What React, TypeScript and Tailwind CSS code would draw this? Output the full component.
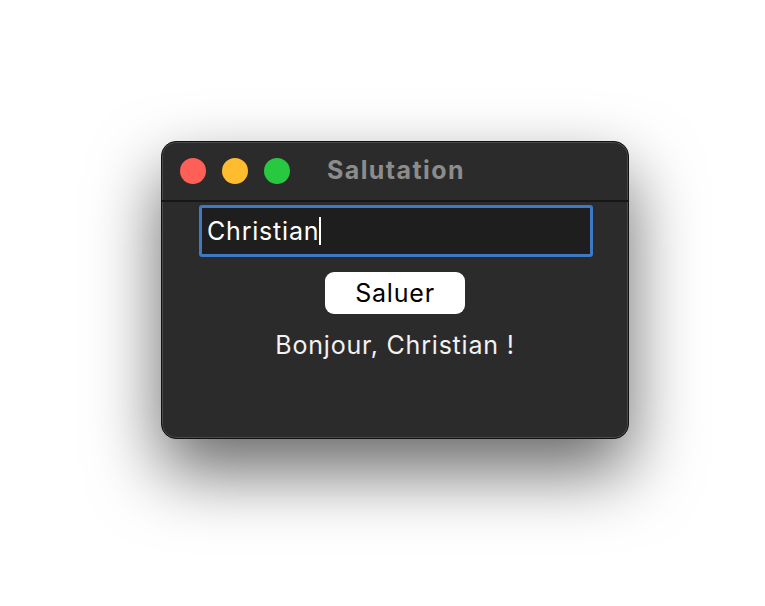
export default function App() {
  return (
    <div className="w-[765px] h-[606px] bg-white pl-[161px] pt-[141px]" style={{ fontFamily: "Inter, 'Liberation Sans', sans-serif" }}>
      <div className="w-[468px] h-[298px] rounded-[15px] bg-[#2b2b2b] border border-[#111] shadow-[0_32px_70px_rgba(0,0,0,0.6),inset_0_0_0_1px_#4a4a4a] flex flex-col overflow-hidden">
        {/* title bar */}
        <div className="h-[60px] flex items-center pl-[18px] border-b-2 border-[#161616]">
          <div className="flex gap-[16px]">
            <span className="w-[26px] h-[26px] rounded-full bg-[#fe5f57]"></span>
            <span className="w-[26px] h-[26px] rounded-full bg-[#febc2e]"></span>
            <span className="w-[26px] h-[26px] rounded-full bg-[#28c840]"></span>
          </div>
          <span className="ml-[37px] text-[25px] font-bold text-[#8c8c8c] tracking-[1.4px]">Salutation</span>
        </div>
        {/* content */}
        <div className="flex flex-col items-center pt-[3px]">
          <div className="w-[394px] h-[52px] rounded-[3px] border-[3px] border-[#3f78c4] bg-[#1e1e1e] flex items-center px-[5px] ml-[2px]">
            <span className="text-[25px] text-white leading-none tracking-[0.8px]">Christian</span>
            <span className="w-[2px] h-[28px] bg-white"></span>
          </div>
          <button className="mt-[15px] w-[140px] h-[42px] rounded-[9px] bg-white text-black text-[25px] leading-none tracking-[0.8px]">Saluer</button>
          <p className="mt-[19px] text-[25px] text-[#f2f2f2] leading-none tracking-[0.8px]">Bonjour, Christian !</p>
        </div>
      </div>
    </div>
  );
}
